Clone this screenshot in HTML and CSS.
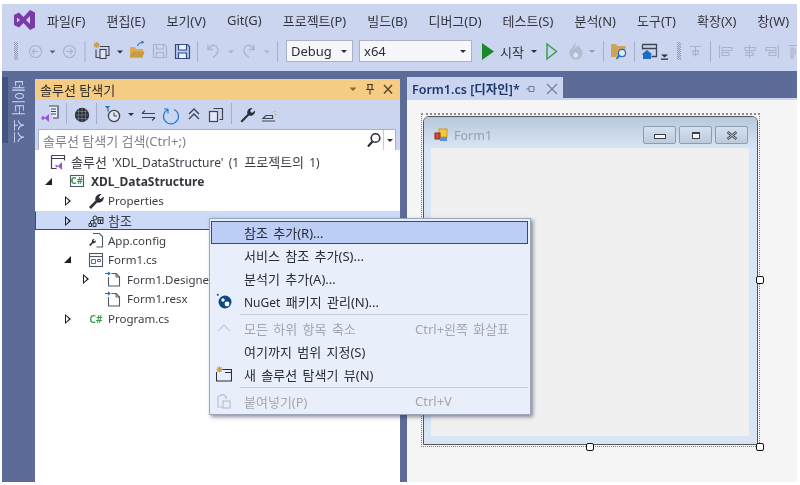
FILE: index.html
```html
<!DOCTYPE html>
<html lang="ko">
<head>
<meta charset="utf-8">
<title>Visual Studio</title>
<link rel="stylesheet" href="styles.css">
</head>
<body>
<div class="app">
  <header class="head">
    <nav class="menubar">
      <svg class="logo" width="21" height="20" viewBox="0 0 21 20"><path fill="#7a3aa8" fill-rule="evenodd" d="M0 5 L5 2.5 L9.5 7 L16 0 L21 2.5 V17.5 L16 20 L9.5 13 L5 17.5 L0 15 Z M3 7.5 V12.5 L6 10 Z M16 6 L12 10 L16 14 Z"/></svg>
      <span>파일(F)</span><span>편집(E)</span><span>보기(V)</span><span>Git(G)</span><span>프로젝트(P)</span><span>빌드(B)</span><span>디버그(D)</span><span>테스트(S)</span><span>분석(N)</span><span>도구(T)</span><span>확장(X)</span><span>창(W)</span>
    </nav>
    <div class="toolbar">
      <svg class="tb-a" width="272" height="34" viewBox="14 34 272 34">
        <g fill="#8f98b0"><path d="M14 42h1v1h-1zM16 42h1v1h-1zM15 43h1v1h-1zM17 43h1v1h-1zM14 44h1v1h-1zM16 44h1v1h-1zM15 45h1v1h-1zM17 45h1v1h-1zM14 46h1v1h-1zM16 46h1v1h-1zM15 47h1v1h-1zM17 47h1v1h-1zM14 48h1v1h-1zM16 48h1v1h-1zM15 49h1v1h-1zM17 49h1v1h-1zM14 50h1v1h-1zM16 50h1v1h-1zM15 51h1v1h-1zM17 51h1v1h-1zM14 52h1v1h-1zM16 52h1v1h-1zM15 53h1v1h-1zM17 53h1v1h-1zM14 54h1v1h-1zM16 54h1v1h-1zM15 55h1v1h-1zM17 55h1v1h-1zM14 56h1v1h-1zM16 56h1v1h-1zM15 57h1v1h-1zM17 57h1v1h-1zM14 58h1v1h-1zM16 58h1v1h-1zM15 59h1v1h-1zM17 59h1v1h-1z"/></g>
        <g fill="none" stroke="#aab3c8" stroke-width="1.1"><circle cx="35.5" cy="51.5" r="6"/><path d="M38.5 51.5h-6M34.5 49l-2.5 2.5 2.5 2.5"/><circle cx="69.5" cy="51.5" r="6"/><path d="M66.5 51.5h6M70 49l2.5 2.5-2.5 2.5"/></g>
        <path d="M49.5 50.5h6l-3 3z" fill="#5a6070"/>
        <rect x="84.5" y="41" width="1" height="21" fill="#a5aec8"/>
        <path d="M97 41.5l.8 1.6 1.7-.5-.6 1.7 1.5.9-1.6.8.4 1.7-1.8-.6-.8 1.5-.8-1.5-1.8.6.4-1.7-1.5-.8 1.5-.9-.6-1.7 1.700.5z" fill="#c9a24e"/>
        <g fill="none" stroke="#3f4450" stroke-width="1.1"><path d="M96 49.5v8h5M100 46.500h9v9h-3"/><rect x="100" y="49.5" width="6" height="9" fill="#dfe4f4"/></g>
        <path d="M117 50.5h6l-3 3z" fill="#2e3038"/>
        <path d="M130 47h5l1.500 2h6.500v8.500h-13z" fill="#d6ad5a"/><path d="M130 57.500l2.500-6h12l-2 6z" fill="#c99a3e"/><path d="M137.500 46c1-2.500 2.500-3.500 4.500-3.500" fill="none" stroke="#2a78c6" stroke-width="1.200"/><path d="M141.500 40.500l3 1.800-3 1.700z" fill="#2a78c6"/>
        <g fill="none" stroke="#aab3c8" stroke-width="1.2"><path d="M153.500 44.500h11l2 2v11h-13z"/><path d="M156.500 44.500v4.500h7v-4.500M156.500 57.500v-5h7v5"/></g>
        <g fill="none" stroke="#2d4a8c" stroke-width="1.2"><path d="M175.500 44.500h12l2 2v12h-14z" fill="#b7c9ee"/><path d="M178.500 45v5h8v-5M178.500 58v-5h8v5" fill="#eef2fb"/></g>
        <rect x="197" y="41" width="1" height="21" fill="#a5aec8"/>
        <path d="M208 44.500v5h5M208.500 49c2-3 4-4.500 6.500-3.500 3.500 1.500 4 6 1 9.500l-3 2.500" fill="none" stroke="#aab3c8" stroke-width="1.300"/>
        <path d="M228 50.500h6l-3 3z" fill="#aab3c8"/>
        <path d="M254 44.500v5h-5M253.500 49c-2-3-4-4.500-6.500-3.500-3.500 1.500-4 6-1 9.500l3 2.500" fill="none" stroke="#aab3c8" stroke-width="1.300"/>
        <path d="M264 50.500h6l-3 3z" fill="#aab3c8"/>
        <rect x="277" y="41" width="1" height="21" fill="#a5aec8"/>
      </svg>
      <div class="combo combo-debug"><span>Debug</span><i class="caret"></i></div>
      <div class="combo combo-arch"><span>x64</span><i class="caret"></i></div>
      <svg class="tb-play" width="28" height="34" viewBox="472 34 28 34"><path d="M482 43l12 8.500-12 8.500z" fill="#188a28"/></svg>
      <span class="start">시작</span>
      <svg class="tb-b" width="273" height="34" viewBox="524 34 273 34">
        <path d="M531 50h6l-3 3z" fill="#2e3038"/>
        <path d="M547 44l9.500 7.500-9.500 7.500z" fill="none" stroke="#38a14a" stroke-width="1.500"/>
        <path d="M575.500 42c1 3-1 4 0 6 2-1 2-3 2-3 3 2.500 5 5 5 8 0 4-3 6.500-6.500 6.500s-6.500-2.500-6.500-6.500c0-4 4-6 6-11z" fill="#b4bbcc"/><path d="M575.500 52c-2 1.500-2.500 3-2 4.500.5 1 3 1.500 4.500 0 1-1.500 0-3-2.500-4.500z" fill="#dfe4f4"/>
        <path d="M589 50h6l-3 3z" fill="#8f98ac"/>
        <rect x="603" y="41" width="1" height="21" fill="#a5aec8"/>
        <path d="M611 44h5l1.500 2h8v11h-14.500z" fill="#cfa455"/><circle cx="622" cy="53" r="3.600" fill="#dfeaf8" stroke="#1b6fc2" stroke-width="1.300"/><path d="M619.500 55.500l-3 3.500" stroke="#1b6fc2" stroke-width="1.800"/>
        <rect x="634" y="41" width="1" height="21" fill="#a5aec8"/>
        <path d="M642.500 44.500h14v12h-5M642.500 48.500h14M642.500 44.500v5" fill="none" stroke="#3f4450" stroke-width="1.300"/><path d="M647 50l5.500 4.500h-1.500v4.500h-8v-4.500h-1.500z" fill="#1b6fc2"/>
        <path d="M661 54.500h7l-3.500 3z" fill="#2e3038"/><rect x="661" y="58.500" width="7" height="1.300" fill="#2e3038"/>
        <g fill="#8f98b0"><path d="M677 42h1v1h-1zM679 42h1v1h-1zM678 43h1v1h-1zM680 43h1v1h-1zM677 44h1v1h-1zM679 44h1v1h-1zM678 45h1v1h-1zM680 45h1v1h-1zM677 46h1v1h-1zM679 46h1v1h-1zM678 47h1v1h-1zM680 47h1v1h-1zM677 48h1v1h-1zM679 48h1v1h-1zM678 49h1v1h-1zM680 49h1v1h-1zM677 50h1v1h-1zM679 50h1v1h-1zM678 51h1v1h-1zM680 51h1v1h-1zM677 52h1v1h-1zM679 52h1v1h-1zM678 53h1v1h-1zM680 53h1v1h-1zM677 54h1v1h-1zM679 54h1v1h-1zM678 55h1v1h-1zM680 55h1v1h-1zM677 56h1v1h-1zM679 56h1v1h-1zM678 57h1v1h-1zM680 57h1v1h-1zM677 58h1v1h-1zM679 58h1v1h-1zM678 59h1v1h-1zM680 59h1v1h-1z"/></g>
        <g fill="none" stroke="#aab3c8" stroke-width="1.100"><path d="M690 46.500h11M695.500 46.500v10M693 50.500h5v4h-5z"/><path d="M719.500 45v13M722 47.500h10v3h-10zM722 52.500h7v3h-7z"/><path d="M749.500 45v13M745 47.500h10v3h-10zM746 52.500h7v3h-7z"/><path d="M778.500 45v13M766 47.500h10v3h-10zM769 52.500h7v3h-7z"/><path d="M789 45.500h8M791 48v10h2v-10zM795 48v7"/></g>
        <rect x="710" y="41" width="1" height="21" fill="#a5aec8"/>
      </svg>
    </div>
  </header>

  <main class="body">
    <aside class="rail"><div class="rail-tab"><span>데이터 소스</span></div></aside>

    <section class="explorer">
      <div class="ex-title">
        <span class="ex-name">솔루션 탐색기</span>
        <svg class="ex-ctl" width="46" height="21" viewBox="349 79 46 21">
          <path d="M349.500 87.500h7l-3.500 3.500z" fill="#8a6a2a"/>
          <path d="M367 84.500h6M368 84.500v5h4v-5M366 89.500h8M370 89.500v5" fill="none" stroke="#4a3a1e" stroke-width="1.100"/>
          <path d="M384 85l8 8.500M392 85l-8 8.500" stroke="#5a4a2a" stroke-width="1.500" fill="none"/>
        </svg>
      </div>
      <div class="ex-tools">
        <svg width="365" height="28" viewBox="35 100 365 28">
          <path d="M49 106h9v12h-5" fill="#e9edf9" stroke="#3f4450" stroke-width="1.200"/><path d="M51 109h5M51 111.500h5M51 114h5" stroke="#3f4450"/><path d="M43 116l2 1.500 4-3.500v8l-4-3.500-2 1.500-1.500-1v-2z" fill="#9a55d6"/>
          <rect x="66" y="103" width="1" height="21" fill="#a5aec8"/>
          <circle cx="82" cy="115" r="7.200" fill="#2b2f38"/><path d="M78.500 109v12M82 108v14M85.500 109v12M75.500 115h13M76.500 111.500h11M76.500 118.500h11" stroke="#77808f" stroke-width=".7"/>
          <rect x="96" y="103" width="1" height="21" fill="#a5aec8"/>
          <path d="M105 106h5l-2.500 3z" fill="#1b6fc2"/><circle cx="114" cy="116" r="5.600" fill="#dfe4f4" stroke="#3f4450" stroke-width="1.300"/><path d="M114 112.500v3.500h3" fill="none" stroke="#3f4450"/><path d="M108 108.500v3" stroke="#3f4450"/>
          <path d="M128 113h6l-3 3z" fill="#2e3038"/>
          <path d="M142 113.500h13M145 110.500l-3 3M142 117.500h13M152 120.500l3-3" fill="none" stroke="#3f4450" stroke-width="1.200"/>
          <path d="M168 109.500a7.500 7.500 0 1 0 6 0M168 109v4.500M168 109h-4" fill="none" stroke="#1b7ed1" stroke-width="1.200"/>
          <path d="M189 114l5-5 5 5M189 119l5-5 5 5" fill="none" stroke="#3f4450" stroke-width="1.400"/>
          <path d="M213.500 108.500h9v11h-3" fill="none" stroke="#3f4450" stroke-width="1.200"/><rect x="209.500" y="111.500" width="8" height="10" fill="#e5e9f7" stroke="#3f4450" stroke-width="1.200"/>
          <rect x="231" y="103" width="1" height="21" fill="#a5aec8"/>
          <path d="M240.500 121l7-7c-1-3 1-6.500 5-6l-2.500 3 2 2 3-2.500c.5 4-3 6-6 5l-7 7z" fill="#2b2f38"/>
          <path d="M263 118.500h9.500v-3h-6.500zM262 121h13" fill="none" stroke="#3f4450" stroke-width="1.200"/><path d="M272 112.500l1-1M275 114.500h1.500M274.500 112l1.500-1" stroke="#c9a24e" stroke-width="1"/>
        </svg>
      </div>
      <div class="search">
        <span class="search-text">솔루션 탐색기 검색(Ctrl+;)</span>
        <svg class="search-ico" width="16" height="16" viewBox="0 0 16 16"><circle cx="9.500" cy="6" r="4.300" fill="none" stroke="#2b2f38" stroke-width="1.600"/><path d="M6.500 9.500l-4.500 5" stroke="#2b2f38" stroke-width="2.200"/></svg>
        <span class="search-drop"><i class="caret"></i></span>
      </div>
      <div class="tree">
        <div class="row lv0 wide">
          <svg class="ico" width="16" height="16" viewBox="0 0 16 16"><path d="M1.500 1.500h13v5M1.500 4.500h13M1.500 1.500v13h5" fill="none" stroke="#3f4450" stroke-width="1.200"/><path d="M6.500 11l1.500 1 4-4v8l-4-3.500-1.500 1-1-1v-2z" fill="#9a55d6"/></svg>
          <span class="t"><span class="h">솔루션</span> 'XDL_DataStructure' (1 <span class="h">프로젝트의</span> 1)</span>
        </div>
        <div class="row lv1">
          <i class="exp down"></i>
          <svg class="ico" width="16" height="16" viewBox="0 0 16 16"><rect x="1.500" y="2.500" width="13" height="11" fill="#fff" stroke="#4c5a66" stroke-width="1.100"/><text class="cs" x="8" y="11" text-anchor="middle">C#</text></svg>
          <b class="t proj">XDL_DataStructure</b>
        </div>
        <div class="row lv2">
          <i class="exp right"></i>
          <svg class="ico" width="16" height="16" viewBox="0 0 16 16"><path d="M1 14l6.500-6.500c-1-3 1.500-7 6-6.500l-2.800 3.200 2 2 3-2.800c.5 4.500-3 7.200-6.500 6l-6.200 6.500z" fill="#2b2f38"/></svg>
          <span class="t">Properties</span>
        </div>
        <div class="row lv2 sel">
          <i class="exp right"></i>
          <svg class="ico" width="16" height="16" viewBox="0 0 16 16"><path d="M1 10.500h2.500v3H1zM5 10h3v3.500H5zM10 4.500h5v6h-5zM10 7h5M12.500 7v3.500M3 7.500h3v3M5 5a2 2 0 1 1 4 0 2 2 0 0 1-4 0zM2.500 10.500V8" fill="none" stroke="#2b2f38" stroke-width="1"/></svg>
          <span class="t h">참조</span>
        </div>
        <div class="row lv2">
          <i class="exp none"></i>
          <svg class="ico" width="16" height="16" viewBox="0 0 16 16"><path d="M5 1.500h6.500l3 3v10.500h-6" fill="#fff" stroke="#4c5a66" stroke-width="1.100"/><path d="M1 13l3-3c-.5-2 .5-3.500 2.500-3l-1.200 1.500 1 1 1.500-1.200c.3 2-1 3.400-3 3l-2.300 2.700z" fill="#2b2f38"/></svg>
          <span class="t">App.config</span>
        </div>
        <div class="row lv2">
          <i class="exp down"></i>
          <svg class="ico" width="16" height="16" viewBox="0 0 16 16"><rect x="1.500" y="1.500" width="13" height="13" fill="#fff" stroke="#4c5a66" stroke-width="1.100"/><path d="M1.500 4.500h13" stroke="#4c5a66" stroke-width="1.100"/><path d="M3.500 7.500h4v4h-4zM9.500 7.500h3v2h-3z" fill="none" stroke="#8252b8"/></svg>
          <span class="t">Form1.cs</span>
        </div>
        <div class="row lv3">
          <i class="exp right"></i>
          <svg class="ico" width="16" height="16" viewBox="0 0 16 16"><path d="M6.500 2.500h4.500l3.500 3.500v9h-11V6" fill="#fff" stroke="#4c5a66" stroke-width="1.100"/><path d="M11 2.500v3.500h3.500" fill="none" stroke="#4c5a66"/><path d="M0 2.500h5M3 .8l2 1.700-2 1.700" fill="none" stroke="#1b6fc2" stroke-width="1.100"/></svg>
          <span class="t">Form1.Designer.cs</span>
        </div>
        <div class="row lv3">
          <i class="exp none"></i>
          <svg class="ico" width="16" height="16" viewBox="0 0 16 16"><path d="M6.500 2.500h4.500l3.500 3.500v9h-11V6" fill="#fff" stroke="#4c5a66" stroke-width="1.100"/><path d="M11 2.500v3.500h3.500" fill="none" stroke="#4c5a66"/><path d="M0 2.500h5M3 .8l2 1.700-2 1.700" fill="none" stroke="#1b6fc2" stroke-width="1.100"/></svg>
          <span class="t">Form1.resx</span>
        </div>
        <div class="row lv2">
          <i class="exp right"></i>
          <svg class="ico" width="16" height="16" viewBox="0 0 16 16"><text class="csg" x="8" y="12" text-anchor="middle">C#</text></svg>
          <span class="t">Program.cs</span>
        </div>
      </div>
    </section>

    <section class="doc">
      <div class="tabs">
        <div class="tab">
          <span class="tab-name">Form1.cs [디자인]*</span>
          <svg class="tab-ctl" width="32" height="12" viewBox="0 0 32 12"><path d="M0 6h3M3 3.500v5h5v-5zM3 3.500h5" fill="none" stroke="#6a7796"/><path d="M21 1l10 10M31 1l-10 10" stroke="#76829c" stroke-width="1.300"/></svg>
        </div>
      </div>
      <div class="canvas">
        <div class="selection">
          <div class="form">
            <div class="form-title">
              <svg class="form-ico" width="14" height="14" viewBox="0 0 14 14"><rect x="5" y="1" width="8" height="8" fill="#f3c93a" stroke="#c99a2e"/><rect x="1" y="5" width="5" height="6" fill="#d24a35" stroke="#8e2c20"/><rect x="6" y="9" width="7" height="4" fill="#5a8fd0"/></svg>
              <span class="form-name">Form1</span>
              <div class="caps">
                <div class="cap"><i class="g-min"></i></div>
                <div class="cap"><i class="g-max"></i></div>
                <div class="cap"><svg width="12" height="9" viewBox="0 0 12 9"><path d="M1.500 1l9 7M10.500 1l-9 7" stroke="#3b3f47" stroke-width="2.400"/><path d="M1.500 1l9 7M10.500 1l-9 7" stroke="#eef2f8" stroke-width=".8"/></svg></div>
              </div>
            </div>
            <div class="client"></div>
          </div>
          <i class="handle h-r"></i><i class="handle h-b"></i><i class="handle h-br"></i>
        </div>
      </div>
    </section>
  </main>

  <div class="ctx">
    <div class="mi hot"><span></span><span>참조 추가(R)...</span></div>
    <div class="mi"><span></span><span>서비스 참조 추가(S)...</span></div>
    <div class="mi"><span></span><span>분석기 추가(A)...</span></div>
    <div class="mi"><svg width="16" height="16" viewBox="0 0 16 16"><circle cx="9" cy="9" r="6.500" fill="#0f4a7e"/><circle cx="1.800" cy="1.800" r="1" fill="#0f4a7e"/><circle cx="7" cy="7" r="1.700" fill="#fff"/><circle cx="11" cy="11" r="2.400" fill="#fff"/></svg><span><span class="lat">NuGet</span> 패키지 관리(N)...</span></div>
    <div class="msep"></div>
    <div class="mi off"><svg width="16" height="16" viewBox="0 0 16 16"><path d="M2 11l6-6 6 6" fill="none" stroke="#c3c9d6" stroke-width="1.200"/></svg><span>모든 하위 항목 축소</span><span>Ctrl+왼쪽 화살표</span></div>
    <div class="mi"><span></span><span>여기까지 범위 지정(S)</span></div>
    <div class="mi"><svg width="16" height="16" viewBox="0 0 16 16"><path d="M5 3.500h10.500v11.500H.5v-9" fill="none" stroke="#2b2f38" stroke-width="1.100"/><path d="M9 6.500h6.500" stroke="#2b2f38"/><path d="M3.500 0l.8 1.600 1.700-.5-.5 1.700 1.500.8-1.500.8.5 1.700-1.700-.5-.8 1.500-.8-1.500-1.700.5.5-1.700L0 3.600l1.500-.8L1 1.100l1.700.5z" fill="#c9a24e"/></svg><span>새 솔루션 탐색기 뷰(N)</span></div>
    <div class="msep"></div>
    <div class="mi off"><svg width="16" height="16" viewBox="0 0 16 16"><path d="M2 3h3V1.500h3V3h2v3M2 3v11h4" fill="none" stroke="#b9bfcc" stroke-width="1.200"/><rect x="7" y="8" width="7" height="7" fill="none" stroke="#b9bfcc" stroke-width="1.200"/></svg><span>붙여넣기(P)</span><span>Ctrl+V</span></div>
  </div>
</div>
</body>
</html>
```

FILE: styles.css
```css
* { box-sizing: border-box; }
html, body { margin: 0; height: 100%; background: #fff; overflow: hidden; }
body { padding: 4px 3px 3px 2px; font-family: "Noto Sans", "Noto Sans CJK KR", sans-serif; font-size: 12px; color: #2a2d33; }
i { display: block; font-style: normal; }
svg { display: block; flex: none; }

.app { position: relative; height: 478px; display: flex; flex-direction: column; overflow: hidden; filter: blur(.3px); }

.head { height: 67px; flex: none; background: #ccd5f0; }
.menubar { height: 30px; padding: 2px 0 0 12px; display: flex; align-items: center; gap: 21px; font-size: 13px; color: #33363d; white-space: nowrap; overflow: hidden; }
.logo { margin-right: -9px; }

.toolbar { height: 34px; padding-left: 12px; display: flex; align-items: center; white-space: nowrap; overflow: hidden; }
.combo { height: 22px; background: #f6f7fb; border: 1px solid #a9b2c6; display: flex; align-items: center; justify-content: space-between; padding: 0 5px 0 4px; font-size: 13px; color: #2a2d33; }
.combo-debug { width: 67px; }
.combo-arch { width: 113px; margin-left: 6px; }
.caret { width: 0; height: 0; border-left: 3px solid transparent; border-right: 3px solid transparent; border-top: 3px solid #2b2f38; }
.start { width: 24px; font-size: 13px; color: #33363d; }

.body { flex: 1; display: flex; background: #5d6b99; min-height: 0; }

.rail { width: 33px; flex: none; padding-top: 6px; }
.rail-tab { width: 6px; height: 66px; background: #445380; position: relative; }
.rail-tab span { position: absolute; left: 6px; top: 2px; width: 22px; height: 66px; writing-mode: vertical-rl; text-orientation: sideways; text-align: center; line-height: 22px; color: #ccd5f0; font-size: 13px; white-space: nowrap; }

.explorer { width: 365px; flex: none; margin-top: 8px; display: flex; flex-direction: column; background: #ccd5f0; }
.ex-title { height: 21px; flex: none; background: #f5cc84; display: flex; align-items: center; justify-content: space-between; padding: 0 5px; }
.ex-name { font-size: 13px; color: #33302a; }
.ex-tools { height: 28px; flex: none; }
.search { height: 22px; flex: none; margin: 1px 4px 0 3px; background: #fff; border: 1px solid #a9b2c6; display: flex; align-items: center; padding-left: 4px; color: #7f8389; font-size: 13px; }
.search-text { flex: 1; white-space: nowrap; }
.search-ico { margin-right: 1px; }
.search-drop { width: 12px; height: 100%; border-left: 1px solid #c5cbd8; display: flex; align-items: center; justify-content: center; }

.tree { flex: 1; background: #fff; padding-top: 2px; font-size: 11.5px; color: #3a3d44; margin-top: -1px; }
.row { height: 19.6px; display: flex; align-items: center; white-space: nowrap; overflow: hidden; }
.row .ico { margin-right: 5px; }
.h { font-size: 13px; }
.wide { font-size: 12px; word-spacing: 2px; }
.exp { width: 8px; height: 10px; flex: none; margin-right: 17px; }
.exp.right { width: 6px; height: 10px; margin-left: 2px; margin-right: 17px; border-left: 6px solid #1e2026; border-top: 5px solid transparent; border-bottom: 5px solid transparent; position: relative; }
.exp.right::after { content: ""; position: absolute; left: -5px; top: -3px; border-left: 3px solid #fff; border-top: 3px solid transparent; border-bottom: 3px solid transparent; }
.exp.down { width: 7px; height: 7px; margin-left: 1px; margin-right: 17px; border-left: 7px solid transparent; border-bottom: 7px solid #1e2026; }
.exp.none { visibility: hidden; margin-right: 17px; }
.lv0 { padding-left: 15px; }
.lv1 { padding-left: 9px; }
.lv1 .ico { margin-right: 6px; }
.lv2 { padding-left: 28px; }
.lv2 .ico { margin-right: 4px; }
.lv3 { padding-left: 46px; }
.lv3 .ico { margin-right: 6px; }
.lv3 .exp { margin-right: 16px; }
.proj { font-weight: 700; font-size: 12px; color: #33363d; }
.sel { background: #ccd9f7; border-top: 1px solid #ccd9f7; border-bottom: 1px solid #2f4a86; border-left: 1px solid #2f4a86; padding-left: 27px; }
.sel .exp.right::after { border-left-color: #ccd9f7; }
.cs { font: 700 8px "DejaVu Sans", sans-serif; fill: #2f8f4a; }
.csg { font: 600 10px "Noto Sans", sans-serif; fill: #2f9a4a; }

.doc { flex: 1; min-width: 0; margin-left: 7px; display: flex; flex-direction: column; }
.tabs { height: 29px; flex: none; padding-top: 6px; }
.tab { width: 156px; height: 23px; background: #ccd5f0; display: flex; align-items: center; padding: 0 5px; }
.tab-name { width: 116px; font-size: 12.5px; font-weight: 600; color: #1d3a6e; white-space: nowrap; }
.tab-ctl { margin-left: 6px; }
.canvas { flex: 1; background: #f5f5f5; border-top: 2px solid #ccd5f0; margin-top: -2px; padding: 13px 0 0 14px; }
.selection { position: relative; width: 339px; height: 334px; border: 1px dotted #7b7b7b; border-top: 2px dotted #8a8a8a; padding: 1px 0 0 1px; }
.form { width: 335px; height: 329px; border: 1px solid #52565c; border-radius: 6px 6px 0 0; background: #d9e5f4; display: flex; flex-direction: column; }
.form-title { height: 31px; flex: none; display: flex; align-items: center; padding: 5px 9px 0 10px; background: linear-gradient(#b5c9dc, #d9e5f4); border-radius: 5px 5px 0 0; }
.form-ico { margin-right: 6px; }
.form-name { flex: 1; color: #9aa1aa; font-size: 12.5px; }
.caps { display: flex; gap: 3px; }
.cap { width: 33px; height: 18px; border: 1px solid #8b9db3; border-radius: 2px; background: linear-gradient(#d4e0ee, #bccbdc); display: flex; align-items: center; justify-content: center; }
.g-min { width: 12px; height: 5px; border: 1px solid #3b3f47; background: #f2f4f7; margin-top: 3px; }
.g-max { width: 8px; height: 7px; border: 1px solid #3b3f47; border-top-width: 2px; background: #f2f4f7; }
.client { flex: 1; margin: 0 8px 8px 7px; background: #f0f0f0; }
.handle { position: absolute; width: 8px; height: 8px; background: #fff; border: 1.500px solid #111; border-radius: 2px; }
.h-r { right: -5px; top: 161px; }
.h-b { left: 164px; bottom: -5px; }
.h-br { right: -5px; bottom: -5px; }

.ctx { position: absolute; left: 207px; top: 214px; width: 322px; height: 197px; background: #e9eefb; border: 1px solid #9aa7ba; box-shadow: 2px 2px 4px rgba(40, 50, 80, .55); padding: 1.500px 2px 0 1px; font-size: 13px; word-spacing: 2px; color: #2a2d33; }
.lat { font-size: 12px; }
.mi { height: 23px; display: grid; grid-template-columns: 33px 171px 1fr; align-items: center; white-space: nowrap; }
.mi > svg { margin-left: 5px; }
.hot { background: #bccdf6; border: 1px solid #2f4a86; }
.hot > span:last-child { margin-left: -1px; }
.off { color: #a3a7ad; }
.msep { height: 4px; margin-left: 29px; padding-top: 1.500px; }
.msep::before { content: ""; display: block; height: 1px; background: #c6ccdc; }
```
